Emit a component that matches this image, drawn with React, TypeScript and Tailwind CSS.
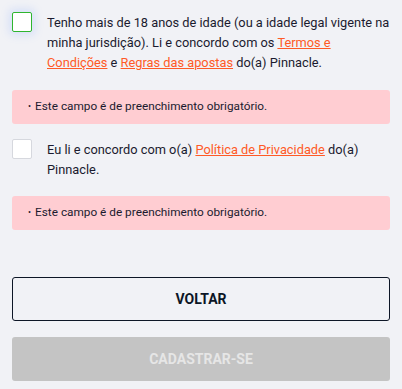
import React from "react";

function ErrorBox() {
  return (
    <div className="mx-3 h-[34px] rounded-[3px] bg-[#ffcdd2] flex items-center pl-4 text-[11.8px] text-[#1b1b2f]">
      <span className="mr-[4px] text-[9px]">•</span>
      <span>Este campo é de preenchimento obrigatório.</span>
    </div>
  );
}

export default function App() {
  return (
    <div
      className="w-[402px] h-[389px] bg-[#f1f2f6] pt-3 overflow-hidden"
      style={{ fontFamily: "Roboto, 'Liberation Sans', sans-serif" }}
    >
      <div className="flex px-3 items-start">
        <div className="w-5 h-5 shrink-0 bg-white border border-[#2fb52f] rounded-[2px] shadow-[0_0_8px_3px_rgba(120,160,255,0.22)]" />
        <p className="ml-[15px] flex-1 text-[12.8px] leading-[20px] text-[#1b1b2f] mt-[1px]">
          Tenho mais de 18 anos de idade (ou a idade legal vigente na minha jurisdição). Li e concordo com os{" "}
          <span className="text-[#ff5a26] underline">Termos e Condições</span> e{" "}
          <span className="text-[#ff5a26] underline">Regras das apostas</span> do(a) Pinnacle.
        </p>
      </div>
      <div className="mt-[17px]">
        <ErrorBox />
      </div>
      <div className="flex px-3 items-start mt-[15px]">
        <div className="w-5 h-5 shrink-0 bg-white border border-[#d6d8de] rounded-[2px]" />
        <p className="ml-[15px] flex-1 text-[12.8px] leading-[20px] text-[#1b1b2f] mt-[1px]">
          Eu li e concordo com o(a){" "}
          <span className="text-[#ff5a26] underline">Política de Privacidade</span> do(a) Pinnacle.
        </p>
      </div>
      <div className="mt-[16px]">
        <ErrorBox />
      </div>
      <div className="px-3 mt-[47px] flex flex-col gap-4">
        <button className="h-[44px] w-full border border-[#0d1626] rounded-[3px] text-[14px] font-bold text-[#0d1626] bg-transparent">
          VOLTAR
        </button>
        <button className="h-[44px] w-full rounded-[3px] bg-[#c4c4c4] text-[14px] font-bold text-[#e6e6e6]">
          CADASTRAR-SE
        </button>
      </div>
    </div>
  );
}
